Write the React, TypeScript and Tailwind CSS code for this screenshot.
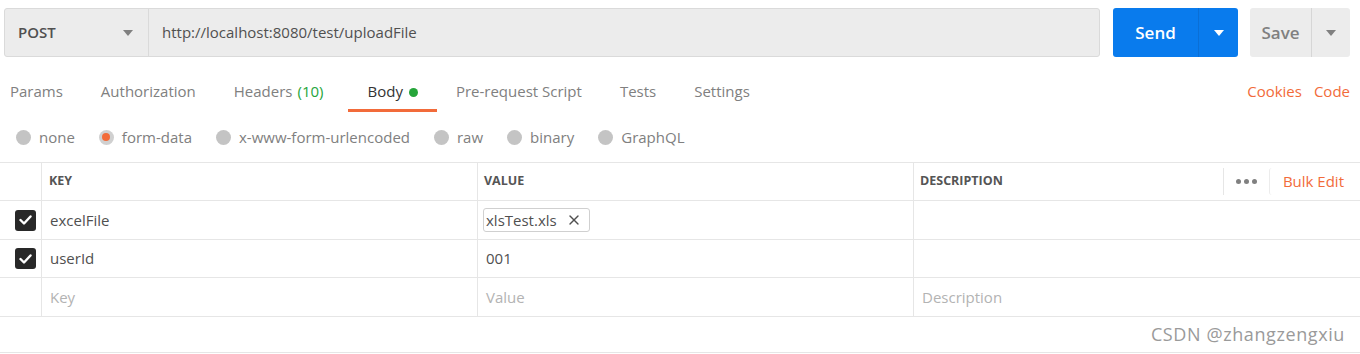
import { X } from "lucide-react";

const tabs = ["Params", "Authorization", "Headers", "Body", "Pre-request Script", "Tests", "Settings"];
const bodyTypes = ["none", "form-data", "x-www-form-urlencoded", "raw", "binary", "GraphQL"];

function Caret({ color }: { color: string }) {
  return (
    <svg width="10" height="6" viewBox="0 0 10 6">
      <path d="M0 0 L10 0 L5 6 Z" fill={color} />
    </svg>
  );
}

function Check() {
  return (
    <div className="w-[21px] h-[21px] rounded-[3px] bg-[#282828] flex items-center justify-center">
      <svg width="13" height="10" viewBox="0 0 13 10">
        <path d="M1.5 5 L5 8.5 L11.5 1.5" stroke="white" strokeWidth="2.4" fill="none" strokeLinecap="round" strokeLinejoin="round" />
      </svg>
    </div>
  );
}

export default function App() {
  return (
    <div className="w-[1360px] h-[354px] bg-white text-[15px] text-[#505050] overflow-hidden" style={{ fontFamily: '"Open Sans", sans-serif' }}>
      {/* request bar */}
      <div className="flex items-center h-[49px] mt-2 pl-1 pr-[10px]">
        <div className="flex h-full flex-1 border border-[#dadada] rounded-[3px] bg-[#ececec]">
          <div className="w-[144px] flex items-center justify-between pl-[13px] pr-[15px] border-r border-[#dadada]">
            <span className="font-semibold text-[#505050]">POST</span>
            <Caret color="#808080" />
          </div>
          <div className="flex items-center pl-[13px] text-[#505050]">http://localhost:8080/test/uploadFile</div>
        </div>
        <div className="flex h-full ml-[13px] w-[125px] rounded-[3px] bg-[#097bed] text-white">
          <div className="w-[86px] flex items-center justify-center font-semibold text-[17px] border-r border-[#0a6fd6]">Send</div>
          <div className="flex-1 flex items-center justify-center"><Caret color="#ffffff" /></div>
        </div>
        <div className="flex h-full ml-[12px] w-[100px] rounded-[3px] bg-[#ececec] text-[#808080]">
          <div className="w-[62px] flex items-center justify-center font-semibold text-[17px] border-r border-[#d6d6d6]">Save</div>
          <div className="flex-1 flex items-center justify-center"><Caret color="#808080" /></div>
        </div>
      </div>

      {/* tabs */}
      <div className="flex items-end h-[55px] px-[10px] leading-[20px]">
        <div className="flex flex-1 gap-[38px]">
          {tabs.map((t) => (
            <div key={t} className={"relative pb-[11px] " + (t === "Body" ? "text-[#333333] px-[19px] -mr-[19px] ml-[-13px]" : "text-[#808080]")}>
              {t}
              {t === "Headers" && <span className="text-[#26a53a] ml-[5px]">(10)</span>}
              {t === "Body" && <span className="inline-block w-[9px] h-[9px] rounded-full bg-[#26a53a] ml-[6px]" />}
              {t === "Body" && <div className="absolute left-0 right-0 bottom-0 h-[3px] bg-[#f26b3a]" />}
            </div>
          ))}
        </div>
        <div className="flex gap-[12px] pb-[11px] text-[#f26b3a]">
          <span>Cookies</span>
          <span>Code</span>
        </div>
      </div>

      {/* body types */}
      <div className="flex items-center h-[50px] pl-[16px] gap-[24px]">
        {bodyTypes.map((b) => (
          <div key={b} className="flex items-center gap-[8px] text-[#808080]">
            {b === "form-data" ? (
              <div className="w-[15px] h-[15px] rounded-full bg-[#d0d0d0] flex items-center justify-center">
                <div className="w-[8px] h-[8px] rounded-full bg-[#f26b3a]" />
              </div>
            ) : (
              <div className="w-[15px] h-[15px] rounded-full bg-[#c4c4c4]" />
            )}
            <span>{b}</span>
          </div>
        ))}
      </div>

      {/* table */}
      <div className="border-t border-[#e6e6e6]">
        <div className="grid grid-cols-[42px_436px_436px_1fr] h-[38px] border-b border-[#e6e6e6]">
          <div className="border-r border-[#e6e6e6]" />
          <div className="border-r border-[#e6e6e6] flex items-center pl-[7px] text-[12.5px] font-bold text-[#555555]">KEY</div>
          <div className="border-r border-[#e6e6e6] flex items-center pl-[6px] text-[12.5px] font-bold text-[#555555]">VALUE</div>
          <div className="flex items-center pl-[6px]">
            <span className="flex-1 text-[12.5px] font-bold text-[#555555]">DESCRIPTION</span>
            <div className="h-[27px] border-l border-[#e6e6e6]" />
            <div className="flex gap-[3px] px-[12px]">
              <span className="w-[5px] h-[5px] rounded-full bg-[#808080]" />
              <span className="w-[5px] h-[5px] rounded-full bg-[#808080]" />
              <span className="w-[5px] h-[5px] rounded-full bg-[#808080]" />
            </div>
            <div className="h-[27px] border-l border-[#ececec] rounded-l-[3px] flex items-center pl-[13px] pr-[16px] text-[#f26b3a]">Bulk Edit</div>
          </div>
        </div>

        <div className="grid grid-cols-[42px_436px_436px_1fr] h-[39px] border-b border-[#e6e6e6]">
          <div className="border-r border-[#e6e6e6] flex items-center pl-[15px]"><Check /></div>
          <div className="border-r border-[#e6e6e6] flex items-center pl-[8px]">excelFile</div>
          <div className="border-r border-[#e6e6e6] flex items-center pl-[5px]">
            <div className="flex items-center h-[24px] border border-[#d0d0d0] rounded-[3px] pl-[2px] pr-[7px] gap-[9px]">
              <span>xlsTest.xls</span>
              <X size={16} strokeWidth={2} color="#505050" />
            </div>
          </div>
          <div />
        </div>

        <div className="grid grid-cols-[42px_436px_436px_1fr] h-[38px] border-b border-[#e6e6e6]">
          <div className="border-r border-[#e6e6e6] flex items-center pl-[15px]"><Check /></div>
          <div className="border-r border-[#e6e6e6] flex items-center pl-[8px]">userId</div>
          <div className="border-r border-[#e6e6e6] flex items-center pl-[8px]">001</div>
          <div />
        </div>

        <div className="grid grid-cols-[42px_436px_436px_1fr] h-[39px] border-b border-[#e6e6e6] text-[#b3b3b3]">
          <div className="border-r border-[#e6e6e6]" />
          <div className="border-r border-[#e6e6e6] flex items-center pl-[8px]">Key</div>
          <div className="border-r border-[#e6e6e6] flex items-center pl-[8px]">Value</div>
          <div className="flex items-center pl-[8px]">Description</div>
        </div>

        <div className="h-[36px] border-b border-[#e6e6e6] flex items-center justify-end pr-[15px] text-[18px] tracking-[0.6px] text-[#9a9a9a]">
          CSDN @zhangzengxiu
        </div>
      </div>
    </div>
  );
}
